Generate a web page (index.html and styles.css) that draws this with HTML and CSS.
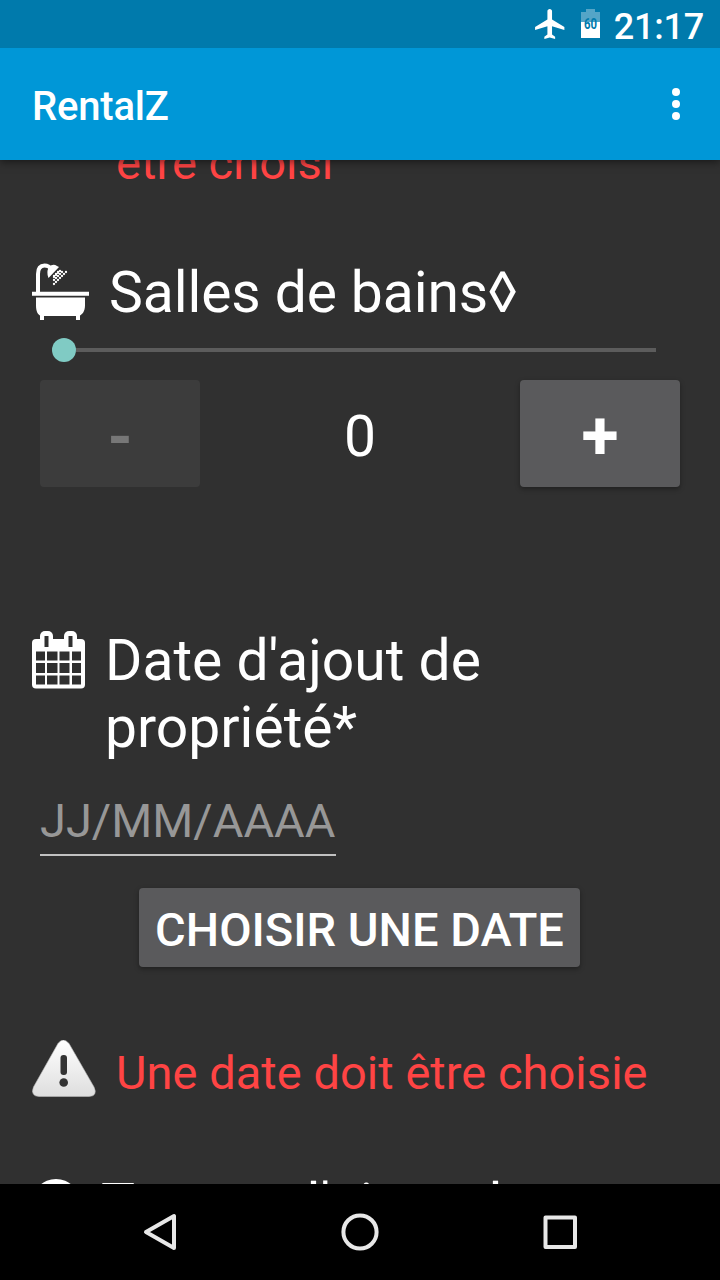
FILE: index.html
```html
<!DOCTYPE html>
<html lang="fr">
<head>
<meta charset="utf-8">
<title>RentalZ</title>
<link rel="stylesheet" href="styles.css">
</head>
<body>
<div class="screen">
  <header class="status">
    <svg class="plane" width="37" height="36" viewBox="0 0 24 24" preserveAspectRatio="none"><path fill="#fff" d="M21 16v-2l-8-5V3.500c0-.83-.67-1.500-1.500-1.500S10 2.670 10 3.500V9l-8 5v2l8-2.500V19l-2 1.500V22l3.500-1 3.500 1v-1.500L13 19v-5.500l8 2.500z"/></svg>
    <svg class="battery" width="20" height="30" viewBox="0 0 20 30"><path fill="#fff" fill-opacity=".33" d="M0 3h5V0h9v3h5v10H0z"/><path fill="#fff" d="M0 13h19v16H0z"/><text x="9.500" y="19.500" text-anchor="middle" textLength="13" lengthAdjust="spacingAndGlyphs" class="level">60</text></svg>
    <span class="clock">21:17</span>
  </header>
  <div class="appbar">
    <h1 class="title">RentalZ</h1>
    <svg class="more" width="8" height="32" viewBox="0 0 8 32"><g fill="#fff"><circle cx="4" cy="4" r="4"/><circle cx="4" cy="16" r="4"/><circle cx="4" cy="28" r="4"/></g></svg>
  </div>
  <main class="content">
    <p class="error error-top">être choisi</p>
    <section class="baths">
      <div class="heading">
        <svg class="bath-icon" width="58" height="60" viewBox="0 0 58 60"><path d="M6 31V11Q6 2.500 12.500 2.500Q17 2.500 19 6" fill="none" stroke="#fff" stroke-width="4"/><path fill="#fff" d="M17 4Q21 0 25 3L27 4L16.500 15Q14 9 17 4z"/><path fill="#fff" d="M0 28.700h57v4H0zM4 34.500h49v8c0 6-3 9-5 10v4.500h-4V53H12v4H8v-4.500c-2-1-4-4-4-10z"/><g fill="none" stroke="#fff" stroke-width="2.300" stroke-linecap="round" stroke-dasharray="0 2.830"><path d="M26 9l-6 6M30 9l-10 10M34 9L20.500 22.500M28 8l-8 8" /></g></svg>
        <h2 class="label">Salles de bains◊</h2>
      </div>
      <div class="slider"><span class="thumb"></span><span class="track"></span></div>
      <div class="stepper">
        <button class="btn step off" disabled>-</button>
        <output class="count">0</output>
        <button class="btn step plus">+</button>
      </div>
    </section>
    <section class="date">
      <div class="heading">
        <svg class="cal-icon" width="54" height="58" viewBox="0 0 54 58"><rect y="8" width="53" height="49.500" rx="4" fill="#fff"/><rect x="8" width="13" height="18" rx="5" fill="#fff"/><rect x="32" width="13" height="18" rx="5" fill="#fff"/><path fill="#303030" d="M12.500 5h4v11h-4zM36.500 5h4v11h-4z"/><path fill="#303030" d="M4 20.500h9v9H4zM15 20.500h10.500v9H15zM27.500 20.500H37.500v9H27.500zM40 20.500h9v9h-9zM4 32h9v10H4zM15 32h10.500v10H15zM27.500 32H37.500v10H27.500zM40 32h9v10h-9zM4 44.500h9v9H4zM15 44.500h10.500v9H15zM27.500 44.500H37.500v9H27.500zM40 44.500h9v9h-9z"/></svg>
        <h2 class="label">Date d'ajout de propriété*</h2>
      </div>
      <div class="field">JJ/MM/AAAA</div>
      <button class="btn pick">CHOISIR UNE DATE</button>
      <div class="warning">
        <svg class="warn-icon" width="64" height="58" viewBox="0 0 64 58"><defs><linearGradient id="g" x2="0" y2="1"><stop stop-color="#fff"/><stop offset="1" stop-color="#dedede"/></linearGradient></defs><path fill="url(#g)" stroke="#bbb" stroke-width=".6" d="M26 3.500q5-7 11 0L62 47q4 9-5 9.500H7Q-2 56 1.500 47z"/><rect x="28.500" y="15" width="6.500" height="20" rx="3" fill="#333"/><circle cx="31.700" cy="42.500" r="4.300" fill="#333"/></svg>
        <p class="error">Une date doit être choisie</p>
      </div>
    </section>
    <div class="heading next">
      <svg class="clock-icon" width="48" height="48" viewBox="0 0 48 48"><circle cx="24" cy="24" r="24" fill="#fff"/><path d="M24 11v14l9 6" fill="none" stroke="#303030" stroke-width="4"/></svg>
      <h2 class="label">Temps d'ajout de</h2>
    </div>
  </main>
  <nav class="nav">
    <svg width="720" height="96" viewBox="0 0 720 96"><g fill="none" stroke="#e8e8e8" stroke-width="4" stroke-linejoin="round"><path d="M174 32v32l-28-16z"/><circle cx="360" cy="48" r="16.600"/><rect x="545.500" y="33.500" width="29.500" height="29.500"/></g></svg>
  </nav>
</div>
</body>
</html>
```
FILE: styles.css
```css
* { box-sizing: border-box; }
body { margin: 0; background: #303030; color: #fff; font-family: Roboto, "Liberation Sans", sans-serif; }
h1, h2, p { margin: 0; font-weight: 400; }
svg { display: block; flex: none; }
.screen { width: 720px; height: 1280px; display: flex; flex-direction: column; overflow: hidden; }
.status { flex: none; height: 48px; background: #007aac; display: flex; justify-content: flex-end; align-items: flex-start; padding-right: 16px; position: relative; z-index: 2; }
.plane { margin: 6px 12px 0 0; }
.battery { margin: 9px 13px 0 0; }
.level { font: 700 14px Roboto, sans-serif; fill: #007aac; }
.clock { font-size: 36px; font-weight: 500; line-height: 42px; padding-top: 6px; letter-spacing: -.2px; }
.appbar { flex: none; height: 112px; background: #0097d7; display: flex; justify-content: space-between; align-items: center; padding: 0 40px 0 32px; box-shadow: 0 2px 8px rgba(0,0,0,.5); position: relative; z-index: 1; }
.title { font-size: 40px; font-weight: 500; line-height: 48px; padding-top: 6px; letter-spacing: -.2px; }
.content { flex: 1; min-height: 0; overflow: hidden; display: flex; flex-direction: column; }
.error { color: #ff4444; font-size: 47px; line-height: 56px; letter-spacing: .04px; white-space: nowrap; }
.error-top { margin: -25px 0 0 116px; }
.heading { display: flex; align-items: flex-start; padding-left: 32px; }
.label { font-size: 57px; line-height: 67px; white-space: nowrap; }
.baths { margin-top: 68px; }
.baths .label { letter-spacing: -.1px; }
.bath-icon { margin: 4px 19px 0 0; }
.slider { display: flex; align-items: center; height: 24px; margin: 12px 64px 0 52px; }
.thumb { width: 24px; height: 24px; border-radius: 50%; background: #80cbc4; }
.track { flex: 1; height: 4px; background: #5c5c5c; }
.stepper { display: flex; justify-content: space-between; align-items: center; margin: 18px 40px 0; }
.btn { border: 0; border-radius: 4px; background: #5a5a5c; color: #fff; font-family: inherit; font-weight: 500; padding: 0; box-shadow: 0 2px 5px rgba(0,0,0,.35); }
.step { width: 160px; height: 107px; font-size: 64px; font-weight: 700; line-height: 75px; padding-top: 8px; }
.plus { font-size: 68px; padding-top: 6px; }
.off { background: #3c3c3c; color: #777; box-shadow: none; }
.count { font-size: 57px; line-height: 66px; padding-top: 7px; }
.date { display: flex; flex-direction: column; margin-top: 140px; }
.cal-icon { margin: 4px 19px 0 0; }
.date .label { width: 440px; white-space: normal; }
.field { align-self: flex-start; margin: 32px 0 0 40px; width: 296px; height: 63px; border-bottom: 2px solid #c1c1c1; font-size: 47px; line-height: 55px; color: #979797; }
.pick { align-self: flex-start; margin: 32px 0 0 139px; width: 441px; height: 79px; font-size: 47px; padding-top: 4px; }
.warning { display: flex; margin: 73px 0 0 32px; }
.warn-icon { margin-right: 20px; }
.warning .error { padding-top: 5px; }
.next { margin-top: 70px; }
.clock-icon { margin: 8px 21px 0 0; }
.nav { flex: none; height: 96px; background: #000; }
```
